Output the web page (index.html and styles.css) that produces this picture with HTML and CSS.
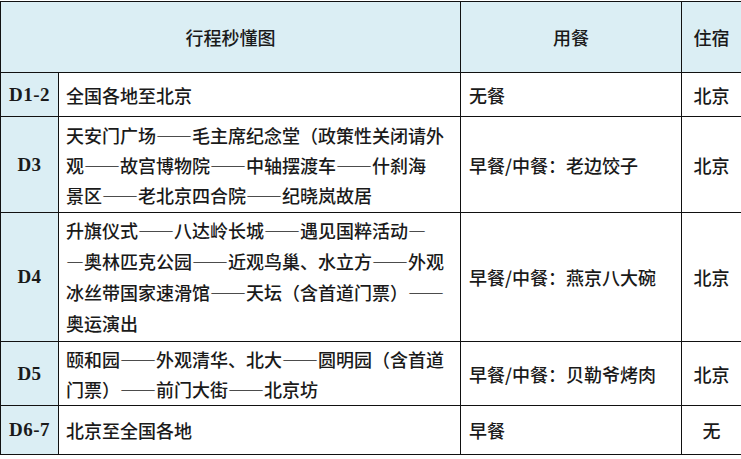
FILE: index.html
```html
<!DOCTYPE html>
<html lang="zh-CN">
<head>
<meta charset="utf-8">
<title>行程秒懂图</title>
<link rel="stylesheet" href="styles.css">
</head>
<body>
<table class="trip">
  <colgroup>
    <col class="c-day">
    <col class="c-route">
    <col class="c-meal">
    <col class="c-stay">
  </colgroup>
  <thead>
    <tr class="r-head">
      <th colspan="2">行程秒懂图</th>
      <th>用餐</th>
      <th>住宿</th>
    </tr>
  </thead>
  <tbody>
    <tr class="r-1">
      <td class="day">D1-2</td>
      <td class="route">全国各地至北京</td>
      <td class="meal">无餐</td>
      <td class="stay">北京</td>
    </tr>
    <tr class="r-3">
      <td class="day">D3</td>
      <td class="route">天安门广场——毛主席纪念堂（政策性关闭请外<br>观——故宫博物院——中轴摆渡车——什刹海<br>景区——老北京四合院——纪晓岚故居</td>
      <td class="meal">早餐/中餐：老边饺子</td>
      <td class="stay">北京</td>
    </tr>
    <tr class="r-4">
      <td class="day">D4</td>
      <td class="route">升旗仪式——八达岭长城——遇见国粹活动—<br>—奥林匹克公园——近观鸟巢、水立方——外观<br>冰丝带国家速滑馆——天坛（含首道门票）——<br>奥运演出</td>
      <td class="meal">早餐/中餐：燕京八大碗</td>
      <td class="stay">北京</td>
    </tr>
    <tr class="r-5">
      <td class="day">D5</td>
      <td class="route">颐和园——外观清华、北大——圆明园（含首道<br>门票）——前门大街——北京坊</td>
      <td class="meal">早餐/中餐：贝勒爷烤肉</td>
      <td class="stay">北京</td>
    </tr>
    <tr class="r-6">
      <td class="day">D6-7</td>
      <td class="route">北京至全国各地</td>
      <td class="meal">早餐</td>
      <td class="stay">无</td>
    </tr>
  </tbody>
</table>
</body>
</html>
```

FILE: styles.css
```css
html, body {
  margin: 0;
  padding: 0;
  background: #ffffff;
}

body {
  padding-top: 1px;
  font-family: "Noto Sans CJK SC", "Liberation Serif", sans-serif;
  color: #1a1a1a;
}

.trip {
  width: 741px;
  border-collapse: collapse;
  table-layout: fixed;
  font-size: 18px;
  line-height: 30px;
  font-weight: 500;
}

.c-day { width: 58px; }
.c-route { width: 402px; }
.c-meal { width: 221px; }
.c-stay { width: 60px; }

.trip th,
.trip td {
  border: 1.5px solid #111111;
  padding: 0;
  vertical-align: middle;
}

.trip th {
  background: #dbeef4;
  font-weight: 500;
  text-align: center;
}

.r-head { height: 71px; }
.r-1 { height: 44px; }
.r-3 { height: 96px; }
.r-4 { height: 129px; }
.r-4 .route { line-height: 31px; }
.r-5 { height: 64px; }
.r-6 { height: 49px; }

.day {
  background: #dbeef4;
  text-align: center;
  font-family: "Liberation Serif", "Noto Sans CJK SC", serif;
  font-size: 19px;
  font-weight: 700;
  letter-spacing: 0.5px;
}

.route {
  padding-left: 7px !important;
  white-space: nowrap;
}

.meal {
  padding-left: 8px !important;
}

.stay {
  text-align: center;
}
```
